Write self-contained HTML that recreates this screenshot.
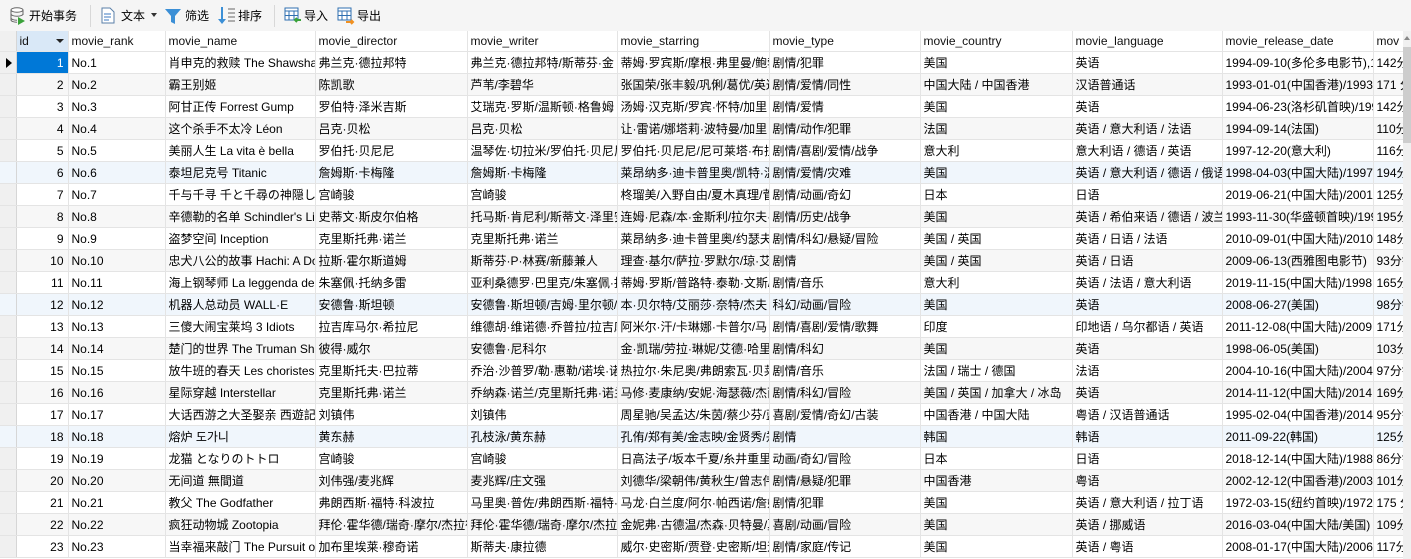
<!DOCTYPE html>
<html><head><meta charset="utf-8">
<style>
*{margin:0;padding:0;box-sizing:border-box}
body{width:1411px;height:559px;overflow:hidden;background:#fff;font-family:"Liberation Sans","Noto Sans CJK SC",sans-serif;font-size:12px;color:#000;position:relative}
#tb{position:absolute;left:0;top:0;width:1411px;height:31px;background:#f5f5f5}
.tbi{position:absolute;top:8px;font-size:12px;line-height:16px;white-space:nowrap}
.sep{position:absolute;top:5px;width:1px;height:22px;background:#d8d8d8}
table{position:absolute;left:0;top:31px;border-collapse:collapse;table-layout:fixed;width:1403px}
td{height:22px;border-right:1px solid #e4e4e4;border-bottom:1px solid #e4e4e4;padding:0 3px;white-space:nowrap;overflow:hidden;line-height:20px}
tr.h td{height:20px;background:#fff;color:#111}
td.ind{background:#f0f0f0;border-right:1px solid #d6d6d6;padding:0}
td.id{text-align:right;padding-right:4px}
tr:nth-child(odd):not(.h) td{background:#f7f7f7}
tr.b td{background:#f0f6fc !important}
td.ind{background:#f0f0f0 !important}
#sb{position:absolute;left:1403px;top:31px;width:8px;height:528px;background:#f0f0f0}
#th{position:absolute;left:1403px;top:47px;width:8px;height:96px;background:#cdcdcd}
</style></head><body>
<div id="tb">
<svg style="position:absolute;left:10px;top:7px" width="16" height="18" viewBox="0 0 16 18"><ellipse cx="7" cy="3" rx="6" ry="2.2" fill="#fff" stroke="#666"/><path d="M1 3v10c0 1.2 2.7 2.2 6 2.2M13 3v5" fill="none" stroke="#666"/><path d="M1 7c0 1.2 2.7 2.2 6 2.2s6-1 6-2.2M1 11c0 1.2 2.7 2.2 6 2.2" fill="none" stroke="#666"/><path d="M8 10l7 4-7 4z" fill="#3aa23a"/></svg>
<span class="tbi" style="left:29px">开始事务</span>
<div class="sep" style="left:90px"></div>
<svg style="position:absolute;left:101px;top:7px" width="14" height="17" viewBox="0 0 14 17"><path d="M1 1h8l4 4v11H1z" fill="#fff" stroke="#5a7fa8"/><path d="M3 7h7M3 10h7M3 13h5" stroke="#3c78c0"/></svg>
<span class="tbi" style="left:121px">文本</span>
<span style="position:absolute;left:151px;top:13px;width:0;height:0;border-left:3px solid transparent;border-right:3px solid transparent;border-top:4px solid #333"></span>
<svg style="position:absolute;left:164px;top:8px" width="18" height="17" viewBox="0 0 18 17"><path d="M1 1h16l-6 7v8l-4-2V8z" fill="#3b8fd6"/></svg>
<span class="tbi" style="left:185px">筛选</span>
<svg style="position:absolute;left:218px;top:6px" width="18" height="19" viewBox="0 0 18 19"><path d="M4 1v15" stroke="#3b8fd6" stroke-width="2"/><path d="M0 13l4 5 4-5z" fill="#3b8fd6"/><path d="M10 3h7M10 7h7M10 11h7M10 15h7" stroke="#666"/></svg>
<span class="tbi" style="left:238px">排序</span>
<div class="sep" style="left:274px"></div>
<svg style="position:absolute;left:284px;top:7px" width="18" height="18" viewBox="0 0 18 18"><rect x="1" y="1" width="13" height="12" fill="#fff" stroke="#2f6fb0"/><path d="M1 4h13M5 4v9M10 4v9M1 8.5h13" stroke="#2f6fb0"/><path d="M17 13h-6M13 11l-2 2 2 2" stroke="#3aa23a" stroke-width="2" fill="none"/></svg>
<span class="tbi" style="left:304px">导入</span>
<svg style="position:absolute;left:337px;top:7px" width="18" height="18" viewBox="0 0 18 18"><rect x="1" y="1" width="13" height="12" fill="#fff" stroke="#2f6fb0"/><path d="M1 4h13M5 4v9M10 4v9M1 8.5h13" stroke="#2f6fb0"/><path d="M9 15h7M14 13l2 2-2 2" stroke="#f09020" stroke-width="2" fill="none"/></svg>
<span class="tbi" style="left:357px">导出</span>
</div>
<table>
<colgroup><col style="width:16px"><col style="width:52px"><col style="width:97px"><col style="width:150px"><col style="width:152px"><col style="width:150px"><col style="width:152px"><col style="width:151px"><col style="width:152px"><col style="width:150px"><col style="width:151px"><col style="width:30px"></colgroup>
<tr class="h"><td class="ind"></td><td style="background:#d9e8f7;position:relative">id<span style="position:absolute;left:39px;top:8px;border-left:4px solid transparent;border-right:4px solid transparent;border-top:4px solid #222"></span></td><td>movie_rank</td><td>movie_name</td><td>movie_director</td><td>movie_writer</td><td>movie_starring</td><td>movie_type</td><td>movie_country</td><td>movie_language</td><td>movie_release_date</td><td>mov</td></tr>
<tr><td class="ind" style="position:relative"><span style="position:absolute;left:6px;top:6px;border-top:5px solid transparent;border-bottom:5px solid transparent;border-left:6px solid #000"></span></td><td class="id" style="background:#0078d7 !important;color:#fff">1</td><td>No.1</td><td>肖申克的救赎 The Shawshank Redemption</td><td>弗兰克·德拉邦特</td><td>弗兰克·德拉邦特/斯蒂芬·金</td><td>蒂姆·罗宾斯/摩根·弗里曼/鲍勃</td><td>剧情/犯罪</td><td>美国</td><td>英语</td><td>1994-09-10(多伦多电影节),1994</td><td>142分钟</td></tr>
<tr><td class="ind"></td><td class="id">2</td><td>No.2</td><td>霸王别姬</td><td>陈凯歌</td><td>芦苇/李碧华</td><td>张国荣/张丰毅/巩俐/葛优/英达</td><td>剧情/爱情/同性</td><td>中国大陆 / 中国香港</td><td>汉语普通话</td><td>1993-01-01(中国香港)/1993</td><td>171 分钟</td></tr>
<tr><td class="ind"></td><td class="id">3</td><td>No.3</td><td>阿甘正传 Forrest Gump</td><td>罗伯特·泽米吉斯</td><td>艾瑞克·罗斯/温斯顿·格鲁姆</td><td>汤姆·汉克斯/罗宾·怀特/加里</td><td>剧情/爱情</td><td>美国</td><td>英语</td><td>1994-06-23(洛杉矶首映)/1994</td><td>142分钟</td></tr>
<tr><td class="ind"></td><td class="id">4</td><td>No.4</td><td>这个杀手不太冷 Léon</td><td>吕克·贝松</td><td>吕克·贝松</td><td>让·雷诺/娜塔莉·波特曼/加里</td><td>剧情/动作/犯罪</td><td>法国</td><td>英语 / 意大利语 / 法语</td><td>1994-09-14(法国)</td><td>110分钟</td></tr>
<tr><td class="ind"></td><td class="id">5</td><td>No.5</td><td>美丽人生 La vita è bella</td><td>罗伯托·贝尼尼</td><td>温琴佐·切拉米/罗伯托·贝尼尼</td><td>罗伯托·贝尼尼/尼可莱塔·布拉斯</td><td>剧情/喜剧/爱情/战争</td><td>意大利</td><td>意大利语 / 德语 / 英语</td><td>1997-12-20(意大利)</td><td>116分钟</td></tr>
<tr class="b"><td class="ind"></td><td class="id">6</td><td>No.6</td><td>泰坦尼克号 Titanic</td><td>詹姆斯·卡梅隆</td><td>詹姆斯·卡梅隆</td><td>莱昂纳多·迪卡普里奥/凯特·温丝</td><td>剧情/爱情/灾难</td><td>美国</td><td>英语 / 意大利语 / 德语 / 俄语</td><td>1998-04-03(中国大陆)/1997</td><td>194分钟</td></tr>
<tr><td class="ind"></td><td class="id">7</td><td>No.7</td><td>千与千寻 千と千尋の神隠し</td><td>宫崎骏</td><td>宫崎骏</td><td>柊瑠美/入野自由/夏木真理/菅原</td><td>剧情/动画/奇幻</td><td>日本</td><td>日语</td><td>2019-06-21(中国大陆)/2001</td><td>125分钟</td></tr>
<tr><td class="ind"></td><td class="id">8</td><td>No.8</td><td>辛德勒的名单 Schindler's List</td><td>史蒂文·斯皮尔伯格</td><td>托马斯·肯尼利/斯蒂文·泽里安</td><td>连姆·尼森/本·金斯利/拉尔夫·费</td><td>剧情/历史/战争</td><td>美国</td><td>英语 / 希伯来语 / 德语 / 波兰语</td><td>1993-11-30(华盛顿首映)/1993</td><td>195分钟</td></tr>
<tr><td class="ind"></td><td class="id">9</td><td>No.9</td><td>盗梦空间 Inception</td><td>克里斯托弗·诺兰</td><td>克里斯托弗·诺兰</td><td>莱昂纳多·迪卡普里奥/约瑟夫·高登</td><td>剧情/科幻/悬疑/冒险</td><td>美国 / 英国</td><td>英语 / 日语 / 法语</td><td>2010-09-01(中国大陆)/2010</td><td>148分钟</td></tr>
<tr><td class="ind"></td><td class="id">10</td><td>No.10</td><td>忠犬八公的故事 Hachi: A Dog's Tale</td><td>拉斯·霍尔斯道姆</td><td>斯蒂芬·P·林赛/新藤兼人</td><td>理查·基尔/萨拉·罗默尔/琼·艾伦</td><td>剧情</td><td>美国 / 英国</td><td>英语 / 日语</td><td>2009-06-13(西雅图电影节)</td><td>93分钟</td></tr>
<tr><td class="ind"></td><td class="id">11</td><td>No.11</td><td>海上钢琴师 La leggenda del pianista</td><td>朱塞佩·托纳多雷</td><td>亚利桑德罗·巴里克/朱塞佩·托纳多雷</td><td>蒂姆·罗斯/普路特·泰勒·文斯/比尔</td><td>剧情/音乐</td><td>意大利</td><td>英语 / 法语 / 意大利语</td><td>2019-11-15(中国大陆)/1998</td><td>165分钟</td></tr>
<tr class="b"><td class="ind"></td><td class="id">12</td><td>No.12</td><td>机器人总动员 WALL·E</td><td>安德鲁·斯坦顿</td><td>安德鲁·斯坦顿/吉姆·里尔顿/彼特</td><td>本·贝尔特/艾丽莎·奈特/杰夫</td><td>科幻/动画/冒险</td><td>美国</td><td>英语</td><td>2008-06-27(美国)</td><td>98分钟</td></tr>
<tr><td class="ind"></td><td class="id">13</td><td>No.13</td><td>三傻大闹宝莱坞 3 Idiots</td><td>拉吉库马尔·希拉尼</td><td>维德胡·维诺德·乔普拉/拉吉库马尔</td><td>阿米尔·汗/卡琳娜·卡普尔/马</td><td>剧情/喜剧/爱情/歌舞</td><td>印度</td><td>印地语 / 乌尔都语 / 英语</td><td>2011-12-08(中国大陆)/2009</td><td>171分钟</td></tr>
<tr><td class="ind"></td><td class="id">14</td><td>No.14</td><td>楚门的世界 The Truman Show</td><td>彼得·威尔</td><td>安德鲁·尼科尔</td><td>金·凯瑞/劳拉·琳妮/艾德·哈里斯</td><td>剧情/科幻</td><td>美国</td><td>英语</td><td>1998-06-05(美国)</td><td>103分钟</td></tr>
<tr><td class="ind"></td><td class="id">15</td><td>No.15</td><td>放牛班的春天 Les choristes</td><td>克里斯托夫·巴拉蒂</td><td>乔治·沙普罗/勒·惠勒/诺埃·诺</td><td>热拉尔·朱尼奥/弗朗索瓦·贝莱昂</td><td>剧情/音乐</td><td>法国 / 瑞士 / 德国</td><td>法语</td><td>2004-10-16(中国大陆)/2004</td><td>97分钟</td></tr>
<tr><td class="ind"></td><td class="id">16</td><td>No.16</td><td>星际穿越 Interstellar</td><td>克里斯托弗·诺兰</td><td>乔纳森·诺兰/克里斯托弗·诺兰</td><td>马修·麦康纳/安妮·海瑟薇/杰西卡</td><td>剧情/科幻/冒险</td><td>美国 / 英国 / 加拿大 / 冰岛</td><td>英语</td><td>2014-11-12(中国大陆)/2014</td><td>169分钟</td></tr>
<tr><td class="ind"></td><td class="id">17</td><td>No.17</td><td>大话西游之大圣娶亲 西遊記大結局</td><td>刘镇伟</td><td>刘镇伟</td><td>周星驰/吴孟达/朱茵/蔡少芬/蓝洁瑛</td><td>喜剧/爱情/奇幻/古装</td><td>中国香港 / 中国大陆</td><td>粤语 / 汉语普通话</td><td>1995-02-04(中国香港)/2014</td><td>95分钟</td></tr>
<tr class="b"><td class="ind"></td><td class="id">18</td><td>No.18</td><td>熔炉 도가니</td><td>黄东赫</td><td>孔枝泳/黄东赫</td><td>孔侑/郑有美/金志映/金贤秀/郑仁</td><td>剧情</td><td>韩国</td><td>韩语</td><td>2011-09-22(韩国)</td><td>125分钟</td></tr>
<tr><td class="ind"></td><td class="id">19</td><td>No.19</td><td>龙猫 となりのトトロ</td><td>宫崎骏</td><td>宫崎骏</td><td>日高法子/坂本千夏/糸井重里/岛本</td><td>动画/奇幻/冒险</td><td>日本</td><td>日语</td><td>2018-12-14(中国大陆)/1988</td><td>86分钟</td></tr>
<tr><td class="ind"></td><td class="id">20</td><td>No.20</td><td>无间道 無間道</td><td>刘伟强/麦兆辉</td><td>麦兆辉/庄文强</td><td>刘德华/梁朝伟/黄秋生/曾志伟</td><td>剧情/悬疑/犯罪</td><td>中国香港</td><td>粤语</td><td>2002-12-12(中国香港)/2003</td><td>101分钟</td></tr>
<tr><td class="ind"></td><td class="id">21</td><td>No.21</td><td>教父 The Godfather</td><td>弗朗西斯·福特·科波拉</td><td>马里奥·普佐/弗朗西斯·福特·科波拉</td><td>马龙·白兰度/阿尔·帕西诺/詹姆斯</td><td>剧情/犯罪</td><td>美国</td><td>英语 / 意大利语 / 拉丁语</td><td>1972-03-15(纽约首映)/1972</td><td>175 分钟</td></tr>
<tr><td class="ind"></td><td class="id">22</td><td>No.22</td><td>疯狂动物城 Zootopia</td><td>拜伦·霍华德/瑞奇·摩尔/杰拉德</td><td>拜伦·霍华德/瑞奇·摩尔/杰拉德</td><td>金妮弗·古德温/杰森·贝特曼/夏奇拉</td><td>喜剧/动画/冒险</td><td>美国</td><td>英语 / 挪威语</td><td>2016-03-04(中国大陆/美国)</td><td>109分钟</td></tr>
<tr><td class="ind"></td><td class="id">23</td><td>No.23</td><td>当幸福来敲门 The Pursuit of Happyness</td><td>加布里埃莱·穆奇诺</td><td>斯蒂夫·康拉德</td><td>威尔·史密斯/贾登·史密斯/坦迪</td><td>剧情/家庭/传记</td><td>美国</td><td>英语 / 粤语</td><td>2008-01-17(中国大陆)/2006</td><td>117分钟</td></tr>
</table>
<div id="sb"></div><div id="th"></div>
<span style="position:absolute;left:1404px;top:36px;border-left:3px solid transparent;border-right:3px solid transparent;border-bottom:4px solid #888"></span>
</body></html>
